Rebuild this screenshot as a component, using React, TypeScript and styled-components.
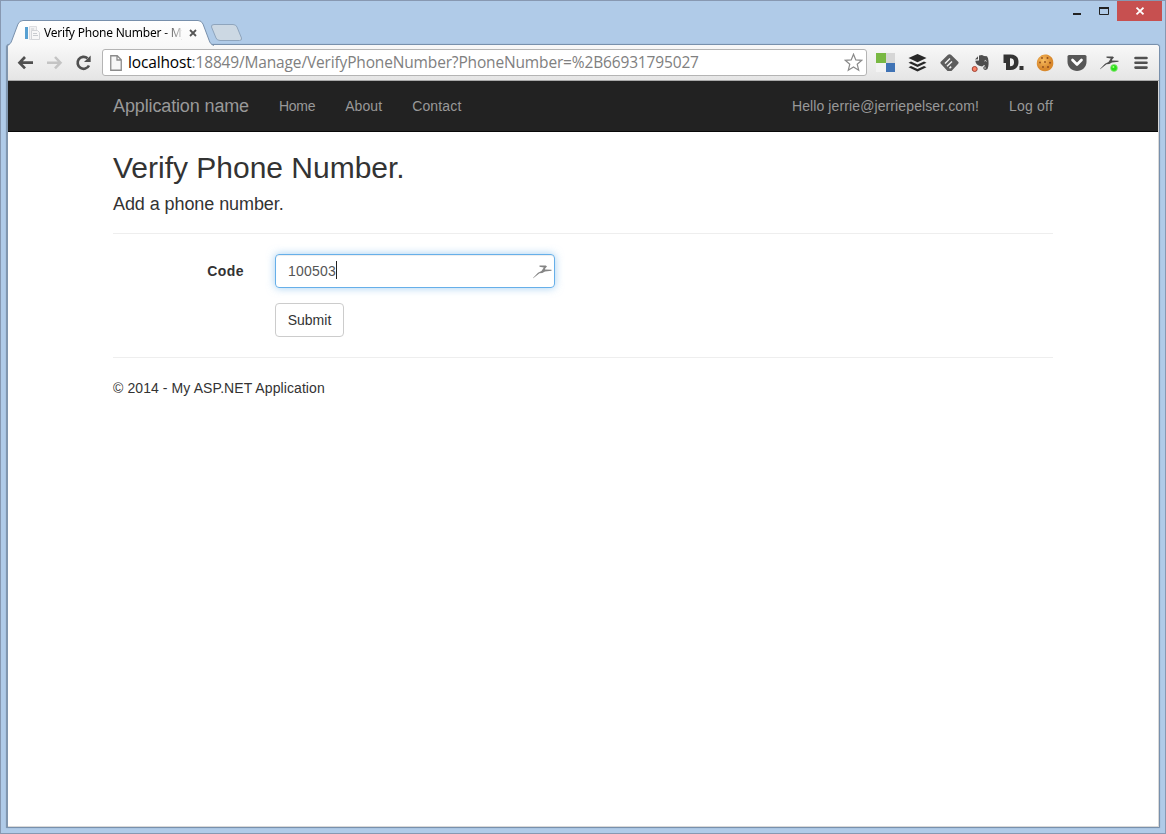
import React from "react";
import styled, { createGlobalStyle } from "styled-components";

const GlobalStyle = createGlobalStyle`
  * { box-sizing: border-box; }
  html, body { margin: 0; padding: 0; overflow: hidden; }
`;

const uiFont = `"Noto Sans", "Open Sans", sans-serif`;
const pageFont = `"Liberation Sans", Arial, sans-serif`;

const Window = styled.div`
  width: 1166px;
  height: 834px;
  display: flex;
  flex-direction: column;
  background: #b0cbe8;
  border: 1px solid #8798b1;
  padding: 0 5px 5px;
`;

const TitleBar = styled.header`
  height: 43px;
  flex: none;
  display: flex;
  justify-content: space-between;
  align-items: flex-start;
  margin-right: -2px;
`;

const TabStrip = styled.div`
  display: flex;
  padding-top: 19px;
  margin-left: 1px;
`;

const Tab = styled.div`
  position: relative;
  z-index: 1;
  width: 206px;
  height: 25px;
  display: flex;
  align-items: center;
  padding: 0 11px 0 17px;
`;

const TabShape = styled.svg`
  position: absolute;
  left: 0;
  top: 0;
`;

const TabContent = styled.div`
  position: relative;
  display: flex;
  align-items: center;
  width: 100%;
`;

const TabTitle = styled.span`
  width: 138px;
  margin-left: 3px;
  overflow: hidden;
  white-space: nowrap;
  font: 12px/18px ${uiFont};
  letter-spacing: -0.21px;
  color: #000;
  mask-image: linear-gradient(to right, #000 118px, transparent 142px);
`;

const CloseIcon = styled.svg`
  margin-left: 7px;
`;

const NewTab = styled.svg`
  margin: 4px 0 0 -3px;
`;

const WindowControls = styled.div`
  display: flex;
  align-items: flex-start;
`;

const ControlButton = styled.button<{ $width: number; $danger?: boolean }>`
  width: ${(p) => p.$width}px;
  height: 20px;
  padding: 0;
  border: 0;
  display: flex;
  align-items: center;
  justify-content: center;
  background: ${(p) => (p.$danger ? "#c75050" : "transparent")};
`;

const Frame = styled.main`
  flex: 1;
  width: 1154px;
  display: flex;
  flex-direction: column;
  border: 1px solid #7890ac;
  border-left: 2px solid #8196ae;
  border-radius: 4px 4px 1px 1px;
  overflow: hidden;
  background: #fff;
  box-shadow: 0 0 1px #7890ac;
`;

const Toolbar = styled.div`
  height: 36px;
  flex: none;
  display: flex;
  align-items: center;
  padding-left: 8px;
  background: linear-gradient(#f8f8f8, #e5e5e5);
  border-bottom: 1px solid #aaa;
`;

const NavIcons = styled.div`
  flex: none;
  display: flex;
  gap: 10px;
  width: 86px;
`;

const AddressBar = styled.div`
  width: 765px;
  height: 27px;
  flex: none;
  display: flex;
  align-items: center;
  padding: 0 3px 0 7px;
  border: 1px solid #b4b4b4;
  border-radius: 3px;
  background: #fff;
`;

const Address = styled.div`
  flex: 1;
  margin-left: 6px;
  white-space: nowrap;
  font: 15.5px/25px "Open Sans", ${uiFont};
  letter-spacing: -0.155px;
  color: #808080;
`;

const Host = styled.span`
  color: #000;
`;

const Extensions = styled.div`
  flex: none;
  display: flex;
  align-items: center;
  gap: 10px;
  margin-left: 7px;
`;

const Viewport = styled.div`
  flex: 1;
  border: solid #d9d9d9;
  border-width: 0 1px 1px 0;
`;

const Navbar = styled.nav`
  height: 51px;
  background: #222;
  border-bottom: 1px solid #080808;
  font-family: ${pageFont};
`;

const Container = styled.div`
  width: 940px;
  margin-left: 105px;
`;

const NavRow = styled(Container)`
  height: 50px;
  display: flex;
  align-items: center;
  gap: 30px;
`;

const Brand = styled.a`
  font-size: 18px;
  line-height: 20px;
  letter-spacing: -0.13px;
  color: #999;
`;

const NavLink = styled.a<{ $push?: boolean; $tracking?: number }>`
  font-size: 14px;
  line-height: 20px;
  color: #999;
  letter-spacing: ${(p) => p.$tracking ?? 0}px;
  margin-left: ${(p) => (p.$push ? "auto" : "0")};
`;

const Page = styled(Container)`
  color: #333;
  font: 14px/20px ${pageFont};
`;

const Title = styled.h2`
  margin: 19px 0 10px;
  font-size: 30px;
  line-height: 33px;
  font-weight: 400;
  letter-spacing: -0.01px;
`;

const Subtitle = styled.h4`
  height: 19px;
  margin: 10px 0;
  font-size: 18px;
  line-height: 20px;
  font-weight: 400;
  letter-spacing: -0.08px;
`;

const Rule = styled.hr`
  height: 1px;
  margin: 20px 0;
  border: 0;
  background: #eee;
`;

const FormRow = styled.div`
  display: grid;
  grid-template-columns: 131px 280px;
  column-gap: 31px;
  align-items: center;
  margin-bottom: 15px;
`;

const Label = styled.label`
  text-align: right;
  font-weight: 700;
  letter-spacing: 0.45px;
`;

const CodeField = styled.div`
  height: 34px;
  display: flex;
  align-items: center;
  padding: 1px 1px 0 12px;
  border: 1px solid #66afe9;
  border-radius: 4px;
  box-shadow: inset 0 1px 1px rgba(0, 0, 0, 0.075), 0 0 8px rgba(102, 175, 233, 0.6);
  color: #555;
  letter-spacing: 0.2px;
`;

const CodeValue = styled.span`
  margin-top: -1px;
`;

const Caret = styled.i`
  width: 1px;
  height: 18px;
  margin: -3px auto 0 0;
  background: #222;
`;

const SubmitButton = styled.button`
  grid-column: 2;
  justify-self: start;
  width: 69px;
  height: 34px;
  padding: 0;
  border: 1px solid #ccc;
  border-radius: 4px;
  background: #fff;
  color: #333;
  font: 14px/20px ${pageFont};
`;

const Footer = styled.footer`
  letter-spacing: 0.09px;
`;

const Hurdler = ({ color, dot }: { color: string; dot?: boolean }) => (
  <svg width="22" height="20" viewBox="0 0 22 20">
    <path transform="translate(1 1)" d="M7.500 2.600h6.300l1.200.8-1.700 1.900-.3 1.300 6.500.2v1l-6.500.8-2.700 1.300-2.800.4-6.300 5L1 15l5-5.300 3.500-1.800 2.300-3.500-4.300-.6z" fill={color} />
    {dot && <circle cx="16" cy="15" r="3.4" fill="#28df16" stroke="#8ce47c" strokeWidth=".8" />}
    {dot && <circle cx="15.4" cy="14" r="1" fill="#a0ff80" />}
  </svg>
);

const Cookie = () => (
  <svg width="22" height="20" viewBox="-1 0 22 20">
    <defs>
      <radialGradient id="cookie" cx=".4" cy=".35">
        <stop offset="0" stopColor="#f8bd61" />
        <stop offset="1" stopColor="#d9892d" />
      </radialGradient>
    </defs>
    <path d="M10 1.500c2 0 3.500.4 4.900 1.500 2 1 3.500 3.800 3.400 6.500.3 2-.6 4.600-2 6-1.600 2-4 2.800-6.400 2.700-2.400.1-4.800-1-6.200-2.800-1.500-1.500-2.200-4-1.800-6.200.1-2.300 1.500-4.600 3.300-5.800C6.600 2.200 8.200 1.500 10 1.500z" fill="url(#cookie)" />
    <g fill="#8e4b1c">
      <circle cx="7" cy="5" r=".9" /><circle cx="12.5" cy="5" r="1" /><circle cx="5" cy="9.5" r=".9" />
      <circle cx="10" cy="9" r=".9" /><circle cx="15" cy="9.8" r="1" /><circle cx="8" cy="14" r=".9" />
      <circle cx="13" cy="14" r="1" />
    </g>
  </svg>
);

export default function App() {
  return (
    <>
      <GlobalStyle />
      <Window>
        <TitleBar>
          <TabStrip>
            <Tab>
              <TabShape width="207" height="26" viewBox="0 0 207 26">
                <defs>
                  <linearGradient id="tab" x1="0" y1="0" x2="0" y2="1">
                    <stop offset="0" stopColor="#fff" />
                    <stop offset="1" stopColor="#f8f8f8" />
                  </linearGradient>
                </defs>
                <path d="M0 25.500C3 24.500 4 23 5 20L11 4Q12.500.5 16 .5H191Q194.500.5 196 4L202 20C203 23 204 24.500 207 25.500" fill="url(#tab)" stroke="#7890ac" />
              </TabShape>
              <TabContent>
                <svg width="17" height="16" viewBox="0 0 17 16">
                  <path d="M1 2h3v12H1z" fill="#57a0d2" />
                  <path d="M5.500 1.500h7v13h-7z" fill="#f2f2f3" stroke="#dcdde0" />
                  <path d="M7.500 5.500h6l2 2v7h-8z" fill="#f8f8f8" stroke="#d3d5d8" />
                  <path d="M7 4h3M9 8.500h4M9 10.500h5" stroke="#c9ccd0" />
                </svg>
                <TabTitle>Verify Phone Number - My</TabTitle>
                <CloseIcon width="8" height="8" viewBox="0 0 8 8">
                  <path d="m1 1 6 6M7 1 1 7" stroke="#555" strokeWidth="1.8" />
                </CloseIcon>
              </TabContent>
            </Tab>
            <NewTab width="33" height="18" viewBox="0 0 33 18">
              <path d="M4 .5H23Q26 .5 27 3L31.500 14Q32 16.500 29.500 16.500H10Q7 16.500 6 14L1.500 3Q1 .5 4 .5z" fill="#ccd8e3" stroke="#8fa5bd" />
            </NewTab>
          </TabStrip>
          <WindowControls>
            <ControlButton $width={26} aria-label="Minimize">
              <svg width="8" height="8"><path d="M0 7h8" stroke="#222" strokeWidth="2" /></svg>
            </ControlButton>
            <ControlButton $width={27} aria-label="Maximize">
              <svg width="11" height="8"><path d="M1.500 1v6.500h9V1" fill="none" stroke="#222" /><path d="M1 1h10" stroke="#222" strokeWidth="2" /></svg>
            </ControlButton>
            <ControlButton $width={45} $danger aria-label="Close">
              <svg width="9" height="8" viewBox="0 0 9 8"><path d="m1.500.7 7 6.600M8.500.7l-7 6.600" stroke="#fff" strokeWidth="1.800" /></svg>
            </ControlButton>
          </WindowControls>
        </TitleBar>
        <Frame>
          <Toolbar>
            <NavIcons>
              <svg width="19" height="18" viewBox="0 0 19 18">
                <path d="M17 8.700H4M9 3 3.500 8.700 9 14.400" fill="none" stroke="#505050" strokeWidth="2.700" />
              </svg>
              <svg width="19" height="18" viewBox="0 0 19 18">
                <path d="M2 8.700h13M10 3l5.500 5.700L10 14.400" fill="none" stroke="#c4c4c4" strokeWidth="2.500" />
              </svg>
              <svg width="19" height="18" viewBox="0 0 19 18">
                <path d="M15 11.500A6 6 0 1 1 13.500 4.200" fill="none" stroke="#505050" strokeWidth="2.700" />
                <path d="M16.700 1.500V8H10z" fill="#505050" />
              </svg>
            </NavIcons>
            <AddressBar>
              <svg width="12" height="16" viewBox="0 0 12 16">
                <path d="M.75.75h6.500l4 4v10.500H.75zM7 1v4h4" fill="#f7f7f7" stroke="#8c8c8c" strokeWidth="1.300" />
              </svg>
              <Address>
                <Host>localhost</Host>:18849/Manage/VerifyPhoneNumber?PhoneNumber=%2B66931795027
              </Address>
              <svg width="19" height="19" viewBox="0 0 19 19">
                <path d="m9.500 1.200 2.300 5.700 6 .4-4.600 3.900 1.500 6-5.200-3.300-5.200 3.300 1.500-6L1.200 7.300l6-.4z" fill="#fff" stroke="#8a8a8a" strokeWidth="1.200" />
              </svg>
            </AddressBar>
            <Extensions>
              <svg width="22" height="20" viewBox="0 0 22 20">
                <path d="M2 0h10v10H2z" fill="#79b843" /><path d="M12 0h9v10h-9z" fill="#d6d6d6" />
                <path d="M2 10h10v9H2z" fill="#f3f3f3" /><path d="M12 10h9v9h-9z" fill="#4073b5" />
              </svg>
              <svg width="22" height="20" viewBox="0 0 22 20">
                <g fill="#282828">
                  <path d="m11.500 1 9 4-9 4.300-9-4.300z" />
                  <path d="m2.500 9.700 2.500-1.200 6.500 3 6.500-3 2.500 1.200-9 4.200z" />
                  <path d="m2.500 14.300 2.500-1.200 6.500 3 6.500-3 2.500 1.200-9 4.200z" />
                </g>
              </svg>
              <svg width="22" height="20" viewBox="0 0 22 20">
                <path d="M10 1.800q1.500-1.300 3 0l7.200 7q1 1 0 2L13.500 18h-4l-6.700-7.200q-1-1 0-2z" fill="#5d5d5d" />
                <path d="m7 10.500 5-5M9 13.200l5-4.700M11.500 15.200l1.700-1.600" fill="none" stroke="#f2f2f2" strokeWidth="1.500" />
              </svg>
              <svg width="22" height="20" viewBox="0 0 22 20">
                <path d="M9 2.500 12 2l2 1 3 .3 1 2c.9 3.600.8 8-.4 10.500-1 1.800-4.300 1.300-4.300-.8 0-1.500 1.200-2 2.200-1.700l-1.400-1.200-2 1.500-3-.8c-2-.6-3.500-2.300-3.800-5L9 7.500z" fill="#4e4e4e" />
                <path d="m5 6.500 3-3.200v3z" fill="#4e4e4e" />
                <path d="M14.500 8q1.500-1 2 .3M14.300 15h1.500" fill="none" stroke="#eee" />
                <circle cx="4.700" cy="16" r="2.500" fill="#fb8065" stroke="#9d4436" />
              </svg>
              <svg width="22" height="20" viewBox="0 0 22 20">
                <path fillRule="evenodd" d="M1.500 1.500h7c5.500 0 8 3 8 7.500 0 5-3 8-8 8H4V10H1.500zM8 5.300v8c3 0 4-1.500 4-4.100 0-2.500-1-3.900-4-3.900z" fill="#333" />
                <path d="M17.500 13h4v4h-4z" fill="#333" />
              </svg>
              <Cookie />
              <svg width="22" height="20" viewBox="0 0 22 20">
                <path d="M3 2h16q1.500 0 1.500 1.500V9c0 5-4.500 9-9.500 9S1.500 14 1.500 9V3.500Q1.500 2 3 2z" fill="#575757" />
                <path d="m6.500 7 4.500 4.500L15.500 7" fill="none" stroke="#fff" strokeWidth="2.700" strokeLinecap="round" strokeLinejoin="round" />
              </svg>
              <Hurdler color="#4d4d4d" dot />
              <svg width="22" height="20" viewBox="0 0 22 20">
                <path d="M5.500 5h11M5.500 9.800h11M5.500 14.600h11" stroke="#505050" strokeWidth="2.600" strokeLinecap="round" />
              </svg>
            </Extensions>
          </Toolbar>
          <Viewport>
            <Navbar>
              <NavRow>
                <Brand>Application name</Brand>
                <NavLink $tracking={-0.3}>Home</NavLink>
                <NavLink $tracking={0.08}>About</NavLink>
                <NavLink $tracking={0.15}>Contact</NavLink>
                <NavLink $push $tracking={0.11}>Hello jerrie@jerriepelser.com!</NavLink>
                <NavLink $tracking={0.2}>Log off</NavLink>
              </NavRow>
            </Navbar>
            <Page>
              <Title>Verify Phone Number.</Title>
              <Subtitle>Add a phone number.</Subtitle>
              <Rule />
              <FormRow>
                <Label>Code</Label>
                <CodeField>
                  <CodeValue>100503</CodeValue>
                  <Caret />
                  <Hurdler color="#858585" />
                </CodeField>
              </FormRow>
              <FormRow>
                <SubmitButton>Submit</SubmitButton>
              </FormRow>
              <Rule />
              <Footer>© 2014 - My ASP.NET Application</Footer>
            </Page>
          </Viewport>
        </Frame>
      </Window>
    </>
  );
}
